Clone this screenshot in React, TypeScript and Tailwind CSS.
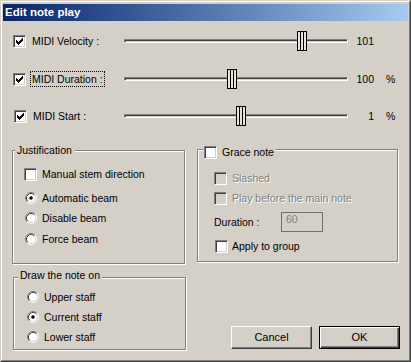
import React from "react";

function Check() {
  const px: [number, number][] = [
    [6, 0], [5, 1], [6, 1], [0, 2], [4, 2], [5, 2], [6, 2],
    [0, 3], [1, 3], [3, 3], [4, 3], [5, 3],
    [0, 4], [1, 4], [2, 4], [3, 4], [4, 4],
    [1, 5], [2, 5], [3, 5], [2, 6],
  ];
  return (
    <svg width="7" height="7" viewBox="0 0 7 7" shapeRendering="crispEdges">
      {px.map(([x, y], i) => (
        <rect key={i} x={x} y={y} width="1" height="1" fill="#000" />
      ))}
    </svg>
  );
}

function CheckBox({ checked, disabled }: { checked?: boolean; disabled?: boolean }) {
  return (
    <span
      className={
        disabled
          ? "flex items-center justify-center w-[13px] h-[13px] shrink-0 border border-t-[#808080] border-l-[#808080] border-b-white border-r-white shadow-[inset_1px_1px_0_#404040,inset_-1px_-1px_0_#d4d0c8] bg-[#d4d0c8]"
          : "flex items-center justify-center w-[13px] h-[13px] shrink-0 border border-t-[#808080] border-l-[#808080] border-b-white border-r-white shadow-[inset_1px_1px_0_#404040,inset_-1px_-1px_0_#d4d0c8] bg-white"
      }
    >
      {checked && <Check />}
    </span>
  );
}

function Radio({ checked }: { checked?: boolean }) {
  return (
    <svg width="12" height="12" viewBox="0 0 12 12" className="shrink-0">
      <circle cx="6" cy="6" r="5" fill="#fff" />
      <path d="M2.11 9.89A5.5 5.5 0 0 1 9.89 2.11" stroke="#808080" fill="none" />
      <path d="M9.89 2.11A5.5 5.5 0 0 1 2.11 9.89" stroke="#fff" fill="none" />
      <path d="M2.82 9.18A4.5 4.5 0 0 1 9.18 2.82" stroke="#404040" fill="none" />
      <path d="M9.18 2.82A4.5 4.5 0 0 1 2.82 9.18" stroke="#d4d0c8" fill="none" />
      {checked && <circle cx="6" cy="6" r="1.8" fill="#000" />}
    </svg>
  );
}

function Slider({ pos }: { pos: number }) {
  return (
    <div className="relative w-[224px] h-[20px] flex items-center shrink-0">
      <div className="w-full h-[4px] border border-t-[#808080] border-l-[#808080] border-b-white border-r-white bg-[#d4d0c8] shadow-[inset_1px_1px_0_#404040]" />
      <svg
        className="absolute top-0"
        style={{ left: pos }}
        width="10"
        height="20"
        viewBox="0 0 10 20"
        shapeRendering="crispEdges"
      >
        <rect x="0" y="0" width="10" height="20" fill="#000" />
        <rect x="1" y="1" width="8" height="18" fill="#e6e4de" />
        <rect x="3" y="1" width="1" height="18" fill="#000" />
        <rect x="6" y="1" width="1" height="18" fill="#000" />
      </svg>
    </div>
  );
}

function Disabled({ children }: { children: React.ReactNode }) {
  return <span className="text-[#808080] [text-shadow:1px_1px_0_#ffffff]">{children}</span>;
}

export default function App() {
  return (
    <div className="w-[411px] h-[362px] border border-t-[#d4d0c8] border-l-[#d4d0c8] border-b-[#404040] border-r-[#404040] bg-[#d4d0c8] font-['Liberation_Sans',Arial,sans-serif] text-[10.5px] leading-[13px] text-black select-none">
      <div className="w-full h-full border border-t-white border-l-white border-b-[#808080] border-r-[#808080] pt-[2px] px-[1px] flex flex-col">
        {/* Title bar */}
        <div className="h-[17px] shrink-0 bg-linear-to-r from-[#0a246a] to-[#a6caf0] flex items-center pl-[2px]">
          <span className="text-white font-bold text-[11.5px] leading-[13px]">Edit note play</span>
        </div>

        {/* Slider rows */}
        <div className="flex items-center h-[20px] mt-[10px] ml-[10px]">
          <CheckBox checked />
          <div className="w-[98px] shrink-0 flex">
            <span className="ml-[6px]">MIDI Velocity :</span>
          </div>
          <Slider pos={173} />
          <span className="w-[26px] text-right">101</span>
        </div>

        <div className="flex items-center h-[20px] mt-[18px] ml-[10px]">
          <CheckBox checked />
          <div className="w-[98px] shrink-0 flex">
            <span className="ml-[4px] px-[1px] border border-dotted border-black leading-[14px]">MIDI Duration :</span>
          </div>
          <Slider pos={103} />
          <span className="w-[26px] text-right">100</span>
          <span className="ml-[12px]">%</span>
        </div>

        <div className="flex items-center h-[20px] mt-[17px] ml-[11px]">
          <CheckBox checked />
          <div className="w-[97px] shrink-0 flex">
            <span className="ml-[6px]">MIDI Start :</span>
          </div>
          <Slider pos={112} />
          <span className="w-[26px] text-right">1</span>
          <span className="ml-[12px]">%</span>
        </div>

        {/* Bottom section */}
        <div className="flex">
          {/* Left column */}
          <div className="flex flex-col ml-[9px] w-[174px]">
            <div className="relative mt-[24px] w-[173px] h-[114px] border border-[#808080] shadow-[inset_1px_1px_0_#fff,1px_1px_0_#fff] flex flex-col pl-[11px] pt-[15px]">
              <div className="absolute -top-[7px] left-[2px] pl-[2px] pr-[3px] bg-[#d4d0c8] h-[13px]">
                Justification
              </div>
              <div className="flex items-center h-[16px]">
                <CheckBox />
                <span className="ml-[5px]">Manual stem direction</span>
              </div>
              <div className="flex items-center h-[20px] mt-[6px] ml-[1px]">
                <Radio checked />
                <span className="ml-[5px]">Automatic beam</span>
              </div>
              <div className="flex items-center h-[20px] ml-[1px]">
                <Radio />
                <span className="ml-[5px]">Disable beam</span>
              </div>
              <div className="flex items-center h-[20px] mt-[1px] ml-[1px]">
                <Radio />
                <span className="ml-[5px]">Force beam</span>
              </div>
            </div>

            <div className="relative mt-[13px] ml-[1px] w-[173px] h-[73px] border border-[#808080] shadow-[inset_1px_1px_0_#fff,1px_1px_0_#fff] flex flex-col pl-[13px] pt-[9px]">
              <div className="absolute -top-[9px] left-[4px] pl-[2px] pr-[2px] bg-[#d4d0c8] h-[13px]">
                Draw the note on
              </div>
              <div className="flex items-center h-[20px]">
                <Radio />
                <span className="ml-[5px]">Upper staff</span>
              </div>
              <div className="flex items-center h-[20px]">
                <Radio checked />
                <span className="ml-[5px]">Current staff</span>
              </div>
              <div className="flex items-center h-[20px]">
                <Radio />
                <span className="ml-[5px]">Lower staff</span>
              </div>
            </div>
          </div>

          {/* Right column */}
          <div className="flex flex-col ml-[11px] w-[203px]">
            <div className="relative mt-[23px] w-[201px] h-[113px] border border-[#808080] shadow-[inset_1px_1px_0_#fff,1px_1px_0_#fff] flex flex-col pl-[16px] pt-[20px]">
              <div className="absolute -top-[4px] left-[5px] pl-[1px] pr-[2px] bg-[#d4d0c8] h-[13px] flex items-center">
                <CheckBox />
                <span className="ml-[5px]">Grace note</span>
              </div>
              <div className="flex items-center h-[16px]">
                <CheckBox disabled />
                <span className="ml-[5px]">
                  <Disabled>Slashed</Disabled>
                </span>
              </div>
              <div className="flex items-center h-[16px] mt-[4px]">
                <CheckBox disabled />
                <span className="ml-[5px]">
                  <Disabled>Play before the main note</Disabled>
                </span>
              </div>
              <div className="flex items-center h-[20px] mt-[6px]">
                <span className="w-[67px] shrink-0">Duration :</span>
                <div className="w-[42px] h-[20px] border border-[#6f6f6f] pl-[4px] leading-[12px] pt-[0px]">
                  <span className="text-[#808080]">60</span>
                </div>
              </div>
              <div className="flex items-center h-[16px] mt-[6px] ml-[1px]">
                <CheckBox />
                <span className="ml-[4px]">Apply to group</span>
              </div>
            </div>

            <div className="flex mt-[64px] ml-[34px] gap-[7px]">
              <button className="w-[81px] h-[23px] border border-t-white border-l-white border-b-[#404040] border-r-[#404040] shadow-[inset_-1px_-1px_0_#808080] bg-[#d4d0c8] flex items-center justify-center text-[11px]">
                Cancel
              </button>
              <button className="w-[81px] h-[23px] border border-black shadow-[inset_1px_1px_0_#fff,inset_-1px_-1px_0_#404040,inset_-2px_-2px_0_#808080] bg-[#d4d0c8] flex items-center justify-center text-[11px]">
                OK
              </button>
            </div>
          </div>
        </div>
      </div>
    </div>
  );
}
